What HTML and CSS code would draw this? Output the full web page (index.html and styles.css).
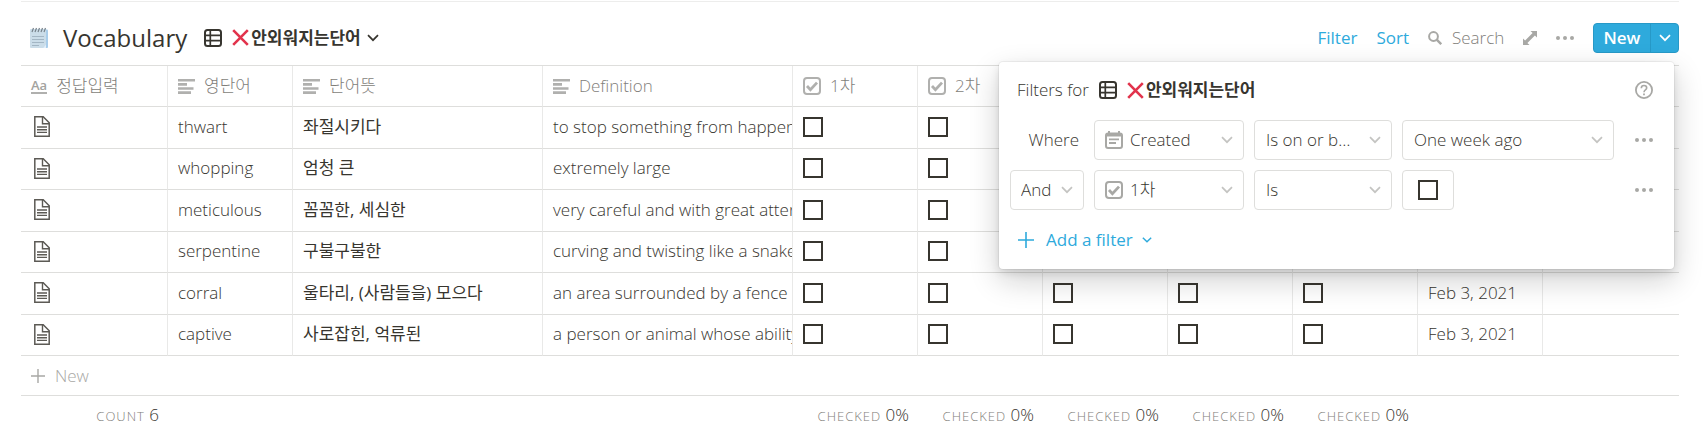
FILE: index.html
```html
<!DOCTYPE html>
<html lang="ko">
<head>
<meta charset="utf-8">
<title>Vocabulary</title>
<link rel="stylesheet" href="styles.css">
</head>
<body>
<svg class="defs" aria-hidden="true">
  <symbol id="i-table" viewBox="0 0 18 18"><g fill="none" stroke="currentColor" stroke-width="2"><rect x="1" y="1" width="16" height="16" rx="2.5"/><path d="M1 6.3h16M1 11.6h16M6.3 1v16" stroke-width="1.7"/></g></symbol>
  <symbol id="i-cross" viewBox="0 0 17 17"><path d="M1.2 1.2l14.6 14.6M15.8 1.2L1.2 15.8" stroke="#e2334c" stroke-width="2.6" fill="none"/></symbol>
  <symbol id="i-chev" viewBox="0 0 12 8"><path d="M1 1.2l5 5 5-5" fill="none" stroke="currentColor" stroke-width="1.7"/></symbol>
  <symbol id="i-text" viewBox="0 0 17 15"><path d="M0 0h17v2.6H0zM0 4.1h9v2.6H0zM0 8.2h15.5v2.6H0zM0 12.3h13v2.6H0z" fill="currentColor"/></symbol>
  <symbol id="i-check" viewBox="0 0 18 18"><rect x="1" y="1" width="16" height="16" rx="3" fill="none" stroke="currentColor" stroke-width="2"/><path d="M4 9l3.400 3.600L14 5.600" fill="none" stroke="currentColor" stroke-width="2.800"/></symbol>
  <symbol id="i-date" viewBox="0 0 18 18"><path d="M3 0h2v1.500h8V0h2v1.500a3 3 0 0 1 3 3V15a3 3 0 0 1-3 3H3a3 3 0 0 1-3-3V4.500a3 3 0 0 1 3-3z" fill="currentColor"/><path d="M2 5.500h14V15a1 1 0 0 1-1 1H3a1 1 0 0 1-1-1z" fill="#fff"/><path d="M4 8.300h10M4 12h7" stroke="currentColor" stroke-width="1.800"/></symbol>
  <symbol id="i-doc" viewBox="0 0 16 21"><path d="M.8.8h8.400l6 6v13.400H.8z" fill="#fff" stroke="#5c5a55" stroke-width="1.500"/><path d="M8.500.8v7h6.700M3 11h10M3 13.700h10M3 16.400h10" fill="none" stroke="#5c5a55" stroke-width="1.400"/></symbol>
  <symbol id="i-plus" viewBox="0 0 16 16"><path d="M8 0v16M0 8h16" stroke="currentColor" stroke-width="1.600"/></symbol>
  <symbol id="i-dots" viewBox="0 0 18 4"><g fill="currentColor"><circle cx="2" cy="2" r="2"/><circle cx="9" cy="2" r="2"/><circle cx="16" cy="2" r="2"/></g></symbol>
</svg>

<main class="database">
  <header class="bar">
    <svg class="notepad" viewBox="0 0 19 22" aria-hidden="true">
      <path d="M4 2.500h13a1 1 0 0 1 1 1V20a1 1 0 0 1-1 1H4z" fill="#a9cdea"/>
      <path d="M1 2h15v15.500L13 21H1a1 1 0 0 1-1-1V3a1 1 0 0 1 1-1z" fill="#cbdde9"/>
      <path d="M16 17.500V21h-3z" fill="#e3effa"/>
      <path d="M2 9.500h12M2 12.500h12M2 15.500h12M2 18.500h7" stroke="#a3b6c4"/>
      <path d="M2 5l1.500-4M5 5l1.500-4M8 5l1.500-4M11 5l1.500-4M14 5l1.500-4" stroke="#77838c" stroke-width="1.200"/>
    </svg>
    <h1 class="title">Vocabulary</h1>
    <button class="view" type="button">
      <svg class="icon-18"><use href="#i-table"/></svg>
      <span class="view-name"><svg class="cross"><use href="#i-cross"/></svg>안외워지는단어</span>
      <svg class="chev"><use href="#i-chev"/></svg>
    </button>
    <div class="tools">
      <button class="link" type="button">Filter</button>
      <button class="link" type="button">Sort</button>
      <label class="search">
        <svg class="icon-14" viewBox="0 0 14 14"><circle cx="5.500" cy="5.500" r="4.400" fill="none" stroke="currentColor" stroke-width="2"/><path d="M8.700 8.700l4.500 4.500" stroke="currentColor" stroke-width="2.400"/></svg>
        <input class="search-box" type="text" placeholder="Search" aria-label="Search">
      </label>
      <button class="tool" type="button" aria-label="Expand">
        <svg class="icon-14" viewBox="0 0 14 14"><path d="M7.500 0H14v6.500l-2.100-2.100-7.500 7.500L6.500 14H0V7.500l2.100 2.100 7.500-7.500z" fill="currentColor"/></svg>
      </button>
      <button class="tool" type="button" aria-label="More"><svg class="dots"><use href="#i-dots"/></svg></button>
      <div class="new">
        <button class="new-main" type="button">New</button>
        <button class="new-more" type="button" aria-label="Templates"><svg class="chev"><use href="#i-chev"/></svg></button>
      </div>
    </div>
  </header>

  <table class="grid">
    <colgroup>
      <col class="c-first"><col class="c-s"><col class="c-l"><col class="c-l"><col class="c-s"><col class="c-s"><col class="c-s"><col class="c-s"><col class="c-s"><col class="c-s"><col>
    </colgroup>
    <thead>
      <tr>
        <th><span class="head"><span class="aa">Aa</span>정답입력</span></th>
        <th><span class="head"><svg class="lines"><use href="#i-text"/></svg>영단어</span></th>
        <th><span class="head"><svg class="lines"><use href="#i-text"/></svg>단어뜻</span></th>
        <th><span class="head"><svg class="lines"><use href="#i-text"/></svg>Definition</span></th>
        <th><span class="head"><svg class="icon-18"><use href="#i-check"/></svg>1차</span></th>
        <th><span class="head"><svg class="icon-18"><use href="#i-check"/></svg>2차</span></th>
        <th></th><th></th><th></th><th></th><th></th>
      </tr>
    </thead>
    <tbody>
      <tr><td><svg class="doc"><use href="#i-doc"/></svg></td><td>thwart</td><td>좌절시키다</td><td>to stop something from happening</td><td><input class="box" type="checkbox" aria-label="1차"></td><td><input class="box" type="checkbox" aria-label="2차"></td><td></td><td></td><td></td><td></td><td></td></tr>
      <tr><td><svg class="doc"><use href="#i-doc"/></svg></td><td>whopping</td><td>엄청 큰</td><td>extremely large</td><td><input class="box" type="checkbox" aria-label="1차"></td><td><input class="box" type="checkbox" aria-label="2차"></td><td></td><td></td><td></td><td></td><td></td></tr>
      <tr><td><svg class="doc"><use href="#i-doc"/></svg></td><td>meticulous</td><td>꼼꼼한, 세심한</td><td>very careful and with great attention</td><td><input class="box" type="checkbox" aria-label="1차"></td><td><input class="box" type="checkbox" aria-label="2차"></td><td></td><td></td><td></td><td></td><td></td></tr>
      <tr><td><svg class="doc"><use href="#i-doc"/></svg></td><td>serpentine</td><td>구불구불한</td><td>curving and twisting like a snake</td><td><input class="box" type="checkbox" aria-label="1차"></td><td><input class="box" type="checkbox" aria-label="2차"></td><td></td><td></td><td></td><td></td><td></td></tr>
      <tr><td><svg class="doc"><use href="#i-doc"/></svg></td><td>corral</td><td>울타리, (사람들을) 모으다</td><td>an area surrounded by a fence</td><td><input class="box" type="checkbox" aria-label="1차"></td><td><input class="box" type="checkbox" aria-label="2차"></td><td><input class="box" type="checkbox" aria-label="3차"></td><td><input class="box" type="checkbox" aria-label="4차"></td><td><input class="box" type="checkbox" aria-label="5차"></td><td>Feb 3, 2021</td><td></td></tr>
      <tr><td><svg class="doc"><use href="#i-doc"/></svg></td><td>captive</td><td>사로잡힌, 억류된</td><td>a person or animal whose ability</td><td><input class="box" type="checkbox" aria-label="1차"></td><td><input class="box" type="checkbox" aria-label="2차"></td><td><input class="box" type="checkbox" aria-label="3차"></td><td><input class="box" type="checkbox" aria-label="4차"></td><td><input class="box" type="checkbox" aria-label="5차"></td><td>Feb 3, 2021</td><td></td></tr>
    </tbody>
    <tfoot>
      <tr class="add-row"><td colspan="11"><button class="add" type="button"><svg class="icon-14"><use href="#i-plus"/></svg>New</button></td></tr>
      <tr class="sums">
        <td><span class="sum">COUNT</span> 6</td><td></td><td></td><td></td>
        <td><span class="sum">CHECKED</span> 0%</td><td><span class="sum">CHECKED</span> 0%</td><td><span class="sum">CHECKED</span> 0%</td><td><span class="sum">CHECKED</span> 0%</td><td><span class="sum">CHECKED</span> 0%</td>
        <td></td><td></td>
      </tr>
    </tfoot>
  </table>

  <section class="popover" aria-label="Filters">
    <div class="pop-head">
      <span>Filters for</span>
      <svg class="icon-18"><use href="#i-table"/></svg>
      <span class="view-name"><svg class="cross"><use href="#i-cross"/></svg>안외워지는단어</span>
      <button class="tool help" type="button" aria-label="Help">
        <svg class="icon-18" viewBox="0 0 18 18" fill="none" stroke="currentColor"><circle cx="9" cy="9" r="8.100" stroke-width="1.800"/><path d="M6.300 7.200c0-3.600 5.400-3.400 5.400-.2 0 1.900-2.700 2-2.700 4.200" stroke-width="1.600"/><path d="M9 12.400v1.800" stroke-width="1.800"/></svg>
      </button>
    </div>
    <div class="rule">
      <span class="where">Where</span>
      <div class="pick has-icon"><svg class="icon-18"><use href="#i-date"/></svg><select aria-label="Property"><option>Created</option></select><svg class="chev"><use href="#i-chev"/></svg></div>
      <div class="pick"><select aria-label="Condition"><option>Is on or before</option></select><svg class="chev"><use href="#i-chev"/></svg></div>
      <div class="pick"><select aria-label="Value"><option>One week ago</option></select><svg class="chev"><use href="#i-chev"/></svg></div>
      <button class="tool more" type="button" aria-label="Filter options"><svg class="dots"><use href="#i-dots"/></svg></button>
    </div>
    <div class="rule">
      <div class="pick joiner"><select aria-label="Operator"><option>And</option></select><svg class="chev"><use href="#i-chev"/></svg></div>
      <div class="pick has-icon"><svg class="icon-18"><use href="#i-check"/></svg><select aria-label="Property"><option>1차</option></select><svg class="chev"><use href="#i-chev"/></svg></div>
      <div class="pick"><select aria-label="Condition"><option>Is</option></select><svg class="chev"><use href="#i-chev"/></svg></div>
      <label class="check-value"><input class="box" type="checkbox" aria-label="Value"></label>
      <button class="tool more" type="button" aria-label="Filter options"><svg class="dots"><use href="#i-dots"/></svg></button>
    </div>
    <button class="add-filter" type="button"><svg class="icon-16"><use href="#i-plus"/></svg>Add a filter<svg class="chev-s"><use href="#i-chev"/></svg></button>
  </section>
</main>
</body>
</html>
```
FILE: styles.css
```css
* { box-sizing: border-box; }

body {
  margin: 0;
  background: #fff;
  color: #37352f;
  font: 300 17px/24px "Open Sans", "Noto Sans CJK KR", sans-serif;
}

button, input, select {
  margin: 0;
  padding: 0;
  border: 0;
  background: none;
  color: inherit;
  font: inherit;
}

svg { display: block; flex: none; }
.defs { position: absolute; width: 0; height: 0; }

.database {
  position: relative;
  margin: 1px 24px 0 21px;
  border-top: 1px solid #ededec;
}

/* Title bar */
.bar {
  display: flex;
  align-items: center;
  height: 63px;
  padding: 8px 0 0 9px;
}
.notepad { width: 19px; height: 22px; }
.title {
  margin: 0 17px 0 14px;
  font-size: 24px;
  font-weight: 500;
  line-height: 32px;
}
.view { display: flex; align-items: center; gap: 10px; }
.view-name { display: flex; align-items: center; gap: 2px; font-weight: 600; }
.view .chev { margin-left: -4px; }
.cross { width: 17px; height: 17px; }
.icon-18 { width: 18px; height: 18px; }
.icon-16 { width: 16px; height: 16px; }
.icon-14 { width: 14px; height: 14px; }
.chev { width: 12px; height: 8px; }
.chev-s { width: 10px; height: 8px; }
.dots { width: 18px; height: 4px; }

.tools { display: flex; align-items: center; gap: 19px; margin-left: auto; }
.link, .add-filter { color: #2eaadc; font-weight: 400; }
.search { display: flex; align-items: center; gap: 10px; color: #a8a8a5; }
.search-box { width: 52px; color: #37352f; }
.search-box::placeholder { color: #7f7e7a; opacity: 1; }
.tool { display: flex; align-items: center; color: #a8a8a5; }
.new {
  display: flex;
  height: 30px;
  border: 1px solid #2799c7;
  border-radius: 4px;
  background: #2eaadc;
  color: #fff;
}
.new-main { width: 56px; font-weight: 600; }
.new-more {
  display: flex;
  align-items: center;
  justify-content: center;
  width: 28px;
  border-left: 1px solid #2799c7;
}

/* Table */
.grid {
  width: 100%;
  table-layout: fixed;
  border-collapse: separate;
  border-spacing: 0;
  border-top: 1px solid #dededc;
}
.c-first { width: 147px; }
.c-s { width: 125px; }
.c-l { width: 250px; }
th, td {
  height: 41px;
  padding: 0 0 0 10px;
  border-right: 1px solid #e9e9e8;
  border-bottom: 1px solid #dededc;
  overflow: hidden;
  white-space: nowrap;
  text-align: left;
  vertical-align: middle;
}
tbody td { padding-bottom: 2px; }
tbody tr:nth-child(odd) td { height: 42px; }
tbody td:nth-child(3) { font-weight: 400; }
th:last-child, td:last-child { border-right: 0; }
th { color: #7f7e7a; font-weight: 300; }
.head { display: flex; align-items: center; gap: 9px; }
.head svg { color: #b0b0ae; }
.lines { width: 17px; height: 15px; }
.aa {
  border-bottom: 2px solid #b0b0ae;
  color: #a3a3a0;
  font-size: 13px;
  font-weight: 600;
  line-height: 14px;
}
.doc { width: 16px; height: 21px; margin-left: 3px; }
.box {
  display: block;
  appearance: none;
  width: 20px;
  height: 20px;
  border: 2px solid #37352f;
  background: #fff;
}
tfoot td { height: 40px; border-right: 0; }
.add { display: flex; align-items: center; gap: 10px; color: #a8a8a5; }
.sums td { height: 39px; padding: 0 9px 0 0; border-bottom: 0; text-align: right; }
.sum { color: #7f7e7a; font-size: 13px; letter-spacing: 1px; }

/* Filter popover */
.popover {
  position: absolute;
  top: 60px;
  right: 5px;
  width: 675px;
  padding: 16px 21px 17px 11px;
  border-radius: 4px;
  background: #fff;
  box-shadow: 0 0 0 1px rgba(15, 15, 15, .05), 0 4px 8px rgba(15, 15, 15, .1), 0 11px 30px rgba(15, 15, 15, .2);
}
.pop-head { display: flex; align-items: center; gap: 10px; padding-left: 7px; }
.help { margin-left: auto; }
.rule {
  display: grid;
  grid-template-columns: 74px 150px 138px 212px 1fr;
  gap: 10px;
  height: 40px;
  margin-top: 10px;
}
.pop-head + .rule { margin-top: 18px; }
.where { align-self: center; padding-right: 5px; text-align: right; }
.pick { display: grid; align-items: center; grid-template-columns: 11px 18px 1fr 12px 11px; }
.pick select {
  grid-area: 1 / 1 / 2 / -1;
  width: 100%;
  height: 40px;
  padding: 0 36px 0 11px;
  appearance: none;
  border: 1px solid #dededc;
  border-radius: 4px;
  overflow: hidden;
  text-overflow: ellipsis;
  white-space: nowrap;
}
.pick.has-icon select { padding-left: 35px; }
.pick.joiner select { padding-right: 24px; padding-left: 10px; }
.pick .chev { grid-area: 1 / 4; color: #c4c4c2; }
.pick .icon-18 { grid-area: 1 / 2; color: #a8a8a5; }
.check-value {
  display: flex;
  align-items: center;
  justify-content: center;
  width: 52px;
  border: 1px solid #dededc;
  border-radius: 4px;
}
.more { justify-self: end; }
.add-filter { display: flex; align-items: center; gap: 12px; margin: 18px 0 0 8px; }
.add-filter .chev-s { margin-left: -3px; }
```
